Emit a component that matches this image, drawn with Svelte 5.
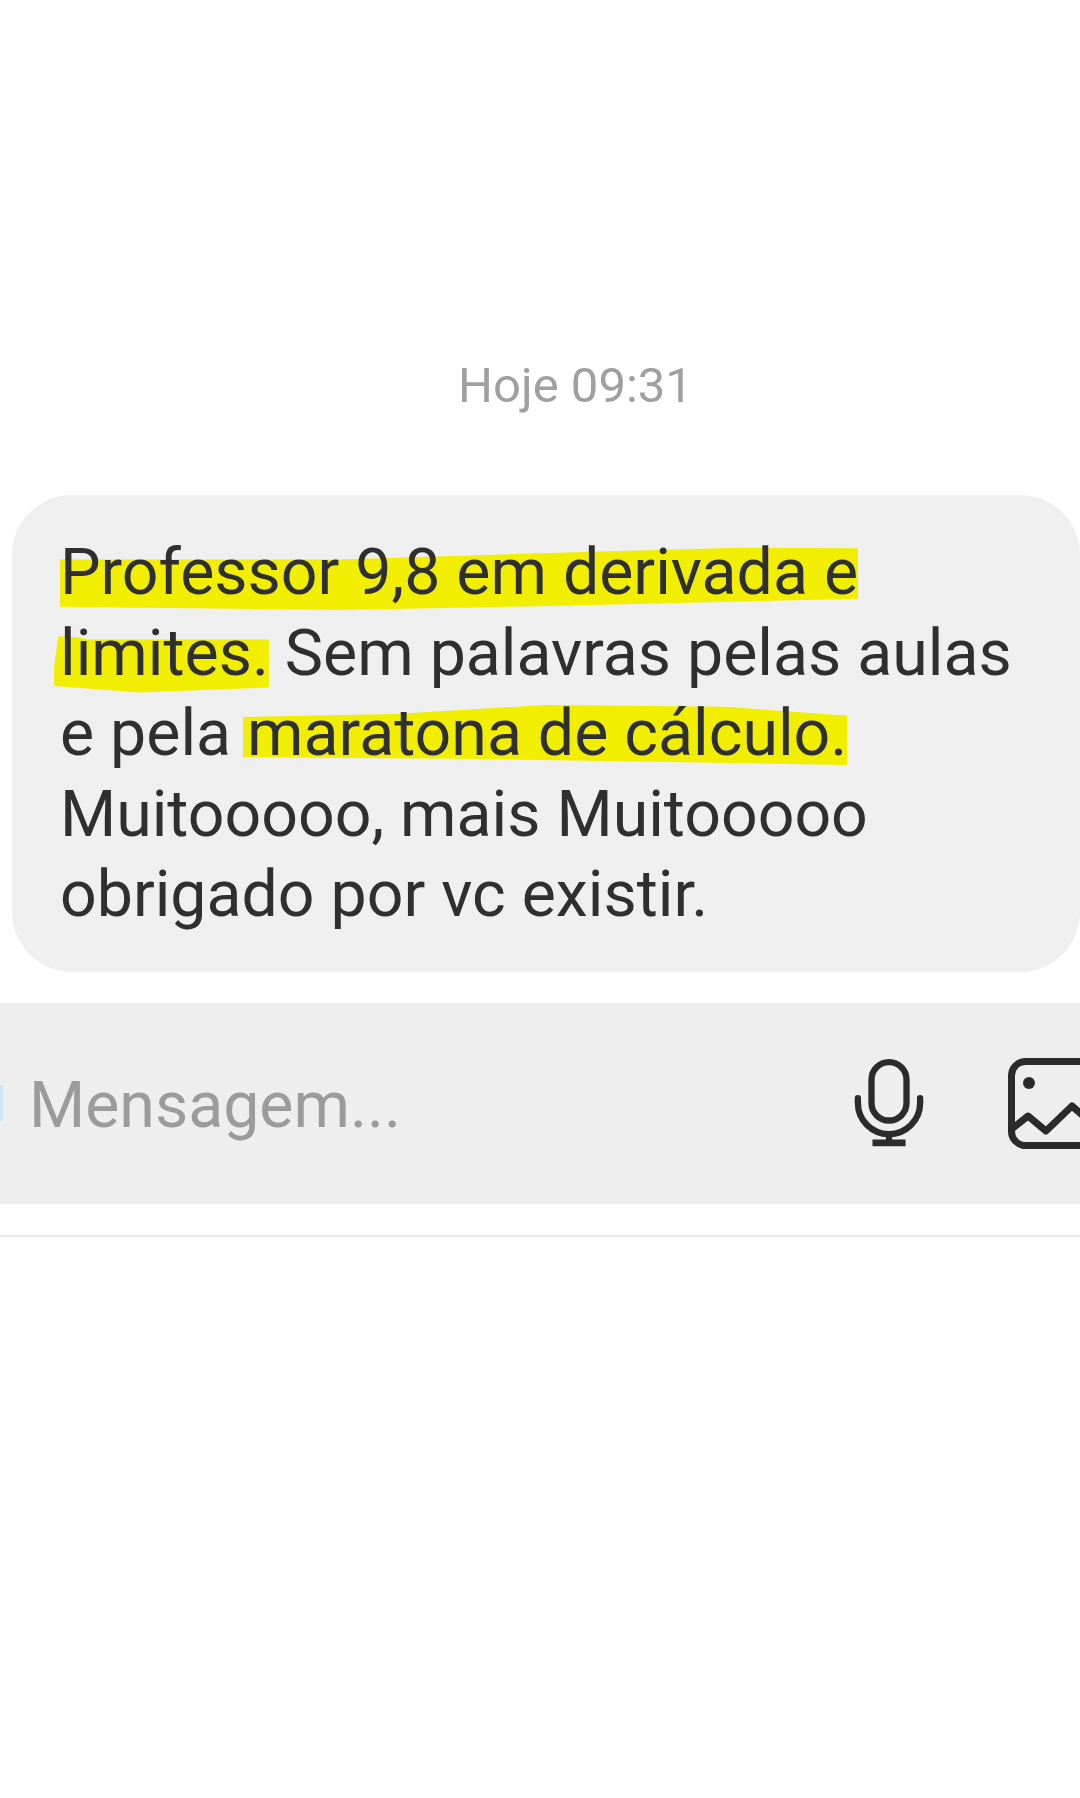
<script lang="ts">
  let placeholder = "Mensagem...";
</script>

<main class="thread">
  <p class="time">Hoje 09:31</p>

  <div class="bubble">
    <mark class="hl a">Professor 9,8 em derivada e</mark><br />
    <mark class="hl b">limites.</mark> Sem palavras pelas aulas<br />
    e pela <mark class="hl c">maratona de cálculo.</mark><br />
    Muitooooo, mais Muitooooo<br />
    obrigado por vc existir.
  </div>

  <div class="composer">
    <span class="cursor"></span>
    <span class="placeholder">{placeholder}</span>
    <svg class="mic" viewBox="0 0 72 92" width="70" height="90" fill="none" stroke="#2b2b2b" stroke-width="6.5">
      <rect x="18" y="3" width="36" height="60" rx="18" />
      <path d="M4 40v5a32 32 0 0 0 64 0v-5" stroke-linecap="round" />
      <path d="M36 77v10" />
      <path d="M19 86h34" stroke-width="7" />
    </svg>
    <svg class="pic" viewBox="0 0 72 92" width="72" height="92" fill="none" stroke="#2b2b2b" stroke-width="7">
      <rect x="3.5" y="3.5" width="100" height="84" rx="14" />
      <circle cx="21" cy="25" r="6" fill="#2b2b2b" stroke="none" />
      <path d="M5 70l15-12 18 15 26-25 16 14" stroke-linejoin="round" />
    </svg>
  </div>

  <div class="divider"></div>
</main>

<style>
  :global(body) {
    background: #fff;
    overflow: hidden;
  }

  .thread {
    width: 1080px;
    height: 1798px;
    overflow: hidden;
    font-family: Roboto, "Liberation Sans", sans-serif;
    display: flex;
    flex-direction: column;
    filter: blur(0.6px);
  }

  .time {
    margin: 359px 0 0 0;
    padding-left: 71px;
    text-align: center;
    font-size: 49px;
    line-height: 54px;
    color: #a0a0a0;
  }

  .bubble {
    margin: 82px 0 0 12px;
    width: 1068px;
    height: 477px;
    box-sizing: border-box;
    padding: 37px 0 0 48px;
    background: #efefef;
    border-radius: 60px;
    font-size: 64.4px;
    line-height: 80.5px;
    color: #2f2f2f;
    white-space: nowrap;
    position: relative;
    z-index: 0;
  }

  .hl {
    background: none;
    color: inherit;
    position: relative;
  }

  .hl::before {
    content: "";
    position: absolute;
    background: #f2ee00;
    z-index: -1;
    left: 0;
    right: 0;
  }

  .a::before {
    top: 13px;
    bottom: 0;
    clip-path: polygon(0 20%, 35% 20%, 60% 10%, 85% 1%, 100% 2%, 100% 82%, 60% 94%, 35% 100%, 0 95%);
  }

  .b::before {
    top: 14px;
    bottom: -2px;
    left: -6px;
    clip-path: polygon(2% 12%, 12% 14%, 16% 17%, 100% 17%, 100% 92%, 40% 100%, 0 90%, 0 60%);
  }

  .c::before {
    top: 10px;
    bottom: 6px;
    left: -4px;
    clip-path: polygon(0 20%, 25% 15%, 50% 0, 80% 3%, 100% 18%, 100% 100%, 70% 95%, 40% 90%, 0 87%);
  }

  .composer {
    margin-top: 31px;
    height: 201px;
    background: #eee;
    display: flex;
    align-items: center;
    position: relative;
  }

  .cursor {
    position: absolute;
    left: 0;
    top: 82px;
    width: 3px;
    height: 36px;
    background: #cfe6f5;
  }

  .placeholder {
    margin-left: 29px;
    padding-top: 3px;
    font-size: 64.4px;
    color: #9b9b9b;
    flex: 1;
  }

  .mic {
    flex: none;
    margin-right: 84px;
    margin-top: 1px;
  }

  .pic {
    flex: none;
    margin-right: 0;
    overflow: visible;
  }

  .divider {
    margin-top: 31px;
    height: 2px;
    background: #e8e8e8;
  }
</style>
